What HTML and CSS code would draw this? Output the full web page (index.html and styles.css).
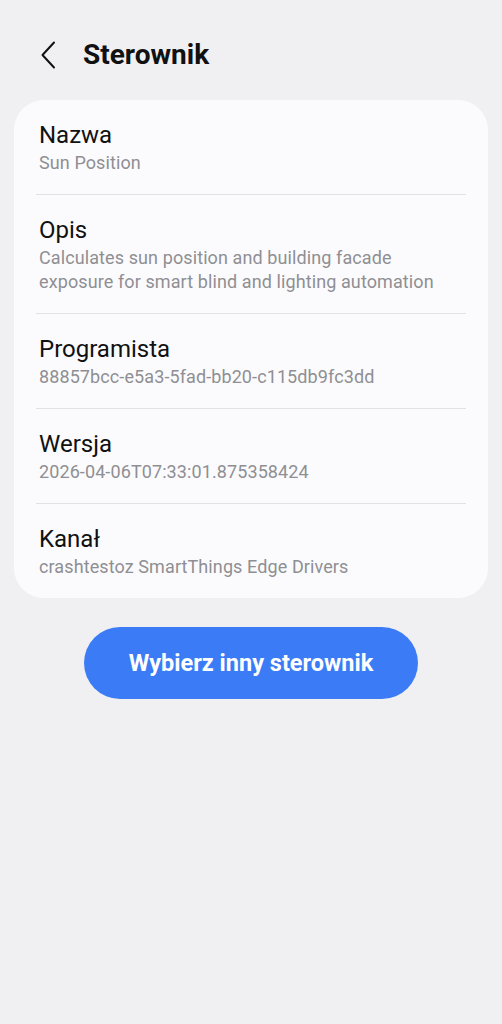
FILE: index.html
```html
<!DOCTYPE html>
<html lang="pl">
<head>
<meta charset="utf-8">
<title>Sterownik</title>
<link rel="stylesheet" href="styles.css">
</head>
<body>
<div class="page">
  <header class="header">
    <button class="back" aria-label="Wstecz">
      <svg width="16" height="28" viewBox="0 0 16 28"><path d="M14 1.5 L2.5 14 L14 26.5" fill="none" stroke="#111" stroke-width="2" stroke-linecap="round" stroke-linejoin="round"/></svg>
    </button>
    <h1 class="title">Sterownik</h1>
  </header>
  <section class="card">
    <div class="row">
      <div class="label">Nazwa</div>
      <div class="value">Sun Position</div>
    </div>
    <div class="divider"></div>
    <div class="row">
      <div class="label">Opis</div>
      <div class="value">Calculates sun position and building facade exposure for smart blind and lighting automation</div>
    </div>
    <div class="divider"></div>
    <div class="row">
      <div class="label">Programista</div>
      <div class="value">88857bcc-e5a3-5fad-bb20-c115db9fc3dd</div>
    </div>
    <div class="divider"></div>
    <div class="row">
      <div class="label">Wersja</div>
      <div class="value">2026-04-06T07:33:01.875358424</div>
    </div>
    <div class="divider"></div>
    <div class="row">
      <div class="label">Kanał</div>
      <div class="value">crashtestoz SmartThings Edge Drivers</div>
    </div>
  </section>
  <div class="actions">
    <button class="primary">Wybierz inny sterownik</button>
  </div>
</div>
</body>
</html>
```

FILE: styles.css
```css
html, body {
  margin: 0;
  padding: 0;
  background: #f0f0f3;
}
body {
  font-family: Roboto, "Noto Sans", sans-serif;
  width: 502px;
  height: 1024px;
}
.page {
  display: flex;
  flex-direction: column;
}
.header {
  display: flex;
  align-items: center;
  gap: 27px;
  padding: 38px 0 0 40px;
  height: 34px;
}
.back {
  border: 0;
  background: none;
  padding: 0;
  width: 16px;
  height: 28px;
  display: flex;
}
.title {
  margin: 0;
  font-size: 28px;
  line-height: 34px;
  font-weight: 700;
  color: #111;
}
.card {
  margin: 28px 14px 0 14px;
  background: #fbfbfd;
  border-radius: 30px;
  display: flex;
  flex-direction: column;
}
.row {
  padding: 20px 40px 19px 25px;
}
.label {
  font-size: 24px;
  line-height: 31px;
  color: #111;
}
.value {
  font-size: 18px;
  line-height: 24px;
  letter-spacing: 0.1px;
  color: #8f8f93;
}
.divider {
  height: 1px;
  background: #e2e2e5;
  margin: 0 22px;
}
.actions {
  display: flex;
  justify-content: center;
  margin-top: 29px;
}
.primary {
  width: 334px;
  height: 72px;
  border: 0;
  border-radius: 36px;
  background: #3b7cf6;
  color: #fff;
  font-family: Roboto, "Noto Sans", sans-serif;
  font-size: 23.5px;
  font-weight: 700;
  line-height: 72px;
  padding: 0;
}
```
